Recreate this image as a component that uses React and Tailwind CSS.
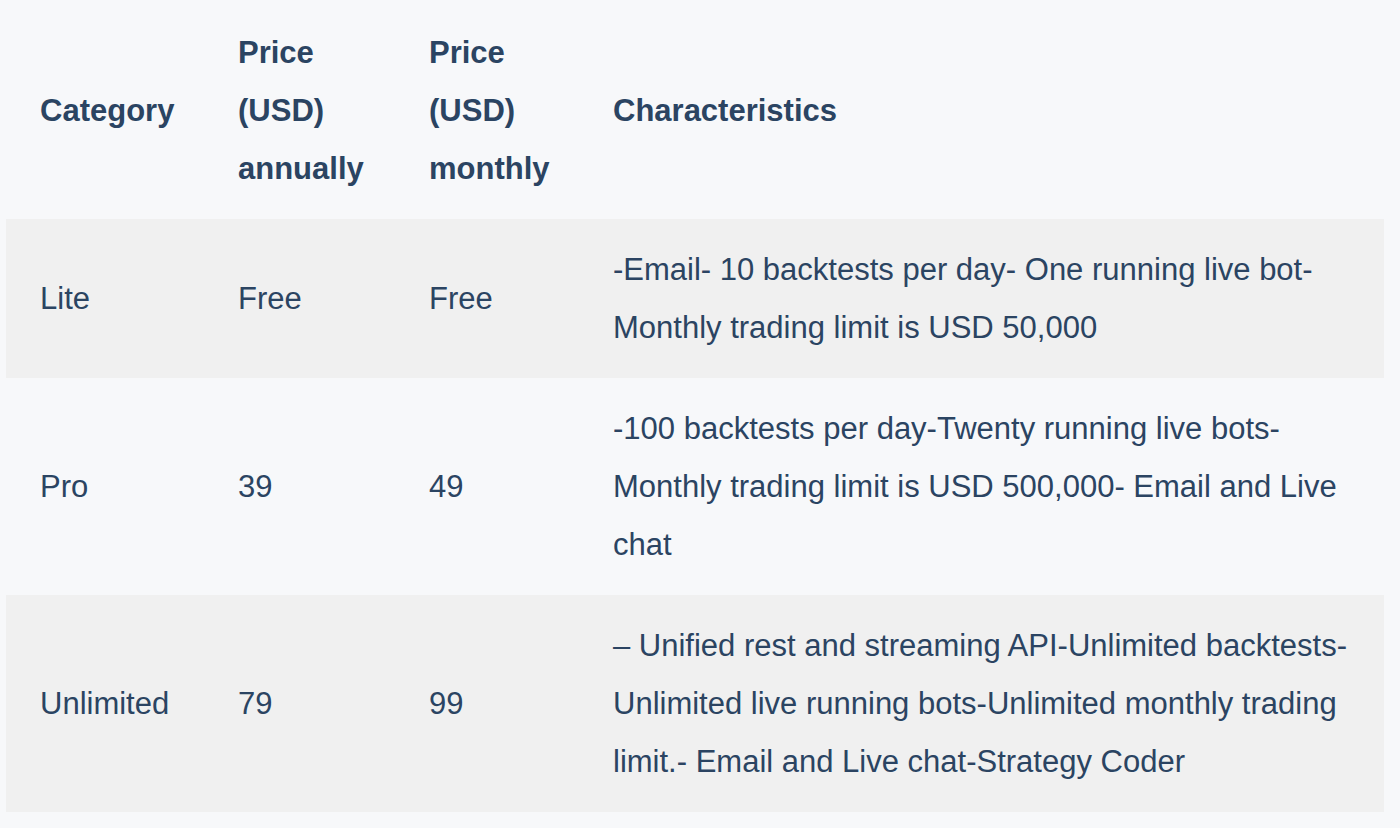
const ROWS = [
  {
    category: 'Lite',
    annual: 'Free',
    monthly: 'Free',
    info: '-Email- 10 backtests per day- One running live bot-Monthly trading limit is USD 50,000',
    shaded: true,
  },
  {
    category: 'Pro',
    annual: '39',
    monthly: '49',
    info: '-100 backtests per day-Twenty running live bots-Monthly trading limit is USD 500,000- Email and Live chat',
    shaded: false,
  },
  {
    category: 'Unlimited',
    annual: '79',
    monthly: '99',
    info: '– Unified rest and streaming API-Unlimited backtests-Unlimited live running bots-Unlimited monthly trading limit.- Email and Live chat-Strategy Coder',
    shaded: true,
  },
]

export default function App() {
  return (
    <div className="w-[1400px] h-[828px] bg-[#f7f8fa] overflow-hidden pl-[6px] pr-[16px] font-['Liberation_Sans',Arial,sans-serif] text-[#2b4462]">
      <table className="w-[1378px] table-fixed border-collapse text-[31px] leading-[58px]">
        <colgroup>
          <col className="w-[198px]" />
          <col className="w-[191px]" />
          <col className="w-[184px]" />
          <col className="w-[805px]" />
        </colgroup>
        <thead>
          <tr className="font-bold text-left">
            <th className="pl-[34px] pr-[20px] pt-[24px] pb-[21px] align-middle font-bold">Category</th>
            <th className="pl-[34px] pr-[20px] pt-[24px] pb-[21px] align-middle font-bold">Price (USD) annually</th>
            <th className="pl-[34px] pr-[20px] pt-[24px] pb-[21px] align-middle font-bold">Price (USD) monthly</th>
            <th className="pl-[34px] pr-[20px] pt-[24px] pb-[21px] align-middle font-bold">Characteristics</th>
          </tr>
        </thead>
        <tbody>
          {ROWS.map(row => (
            <tr key={row.category} className={row.shaded ? 'bg-[#f0f0f0]' : ''}>
              <td className="pl-[34px] pr-[20px] pt-[22px] pb-[21px] align-middle">{row.category}</td>
              <td className="pl-[34px] pr-[20px] pt-[22px] pb-[21px] align-middle">{row.annual}</td>
              <td className="pl-[34px] pr-[20px] pt-[22px] pb-[21px] align-middle">{row.monthly}</td>
              <td className="pl-[34px] pr-[20px] pt-[22px] pb-[21px] align-middle">{row.info}</td>
            </tr>
          ))}
        </tbody>
      </table>
    </div>
  )
}
